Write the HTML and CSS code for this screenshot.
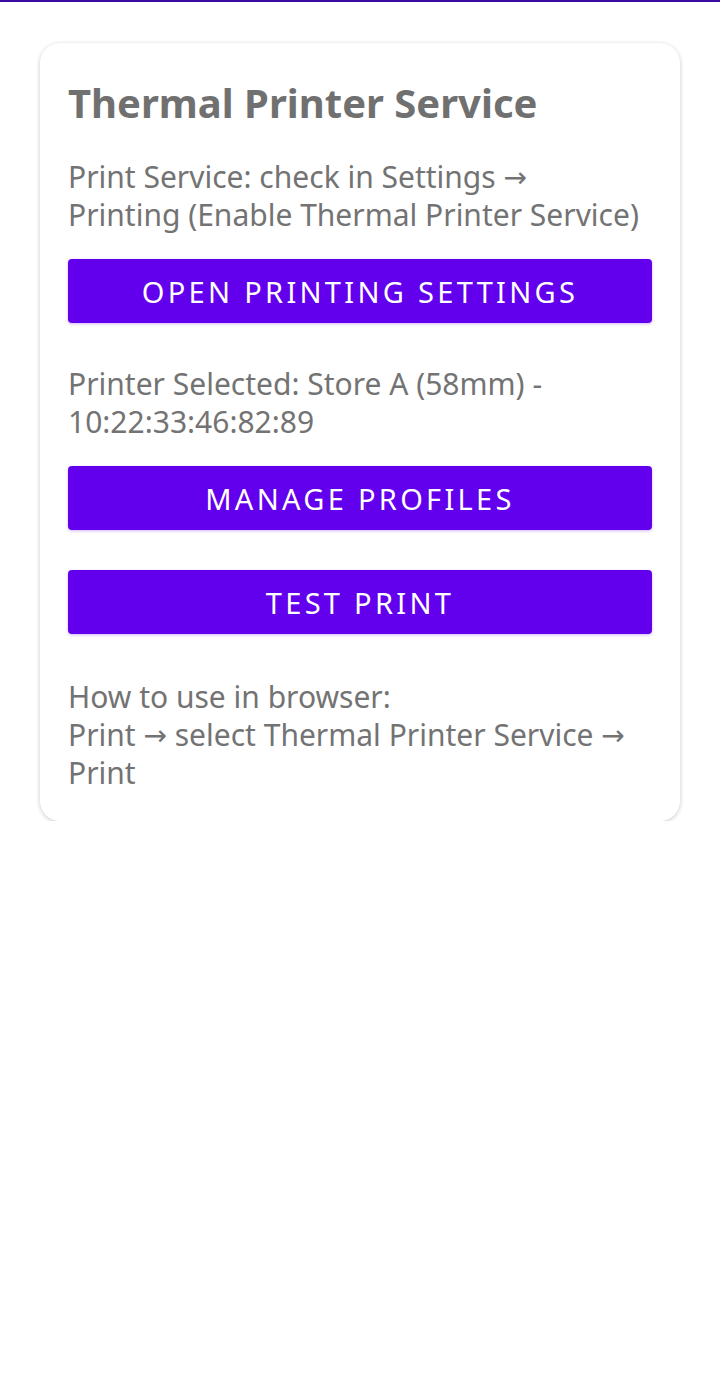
FILE: index.html
```html
<!DOCTYPE html>
<html>
<head>
<meta charset="utf-8">
<link rel="stylesheet" href="styles.css">
</head>
<body>
<div class="topbar"></div>
<main class="page">
  <section class="card">
    <h1 class="title">Thermal Printer Service</h1>
    <p class="text t1">Print Service: check in Settings <span class="arr">→</span><br>Printing (Enable Thermal Printer Service)</p>
    <button class="btn b1">OPEN PRINTING SETTINGS</button>
    <p class="text t2">Printer Selected: Store A (58mm) -<br>10:22:33:46:82:89</p>
    <button class="btn b2">MANAGE PROFILES</button>
    <button class="btn b3">TEST PRINT</button>
    <p class="text t3">How to use in browser:<br>Print <span class="arr">→</span> select Thermal Printer Service <span class="arr">→</span><br>Print</p>
  </section>
</main>
</body>
</html>
```
FILE: styles.css
```css
html, body { margin: 0; padding: 0; background: #fff; }
body { font-family: "Noto Sans", "Open Sans", sans-serif; }
.topbar { height: 2px; background: #3a0ca3; }
.page { padding: 41px 40px 0; }
.card {
  background: #fff;
  border-radius: 20px;
  box-shadow: 0 1px 4px rgba(0,0,0,0.22);
  padding: 28px 28px 29px;
  display: flex;
  flex-direction: column;
}
.title {
  margin: 0;
  font-size: 40px;
  line-height: 64px;
  font-weight: 700;
  color: #707070;
}
.text {
  margin: 0;
  font-size: 30px;
  line-height: 38px;
  color: #737373;
}
.arr {
  font-family: "DejaVu Sans", sans-serif;
  font-size: 28px;
  line-height: 0;
  vertical-align: 1px;
}
.t1 { margin-top: 23px; }
.btn {
  display: block;
  width: 100%;
  height: 64px;
  border: 0;
  border-radius: 4px;
  background: #6200ee;
  color: #fff;
  font-family: inherit;
  font-size: 29px;
  letter-spacing: 3.3px;
  box-shadow: 0 1px 3px rgba(98,0,238,0.3);
}
.b1 { margin-top: 25px; }
.t2 { margin-top: 42px; }
.b2 { margin-top: 25px; }
.b3 { margin-top: 40px; }
.t3 { margin-top: 44px; }
```
